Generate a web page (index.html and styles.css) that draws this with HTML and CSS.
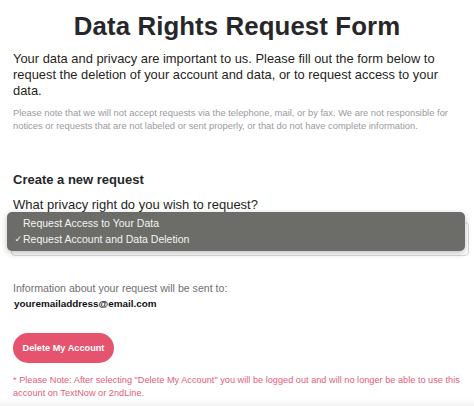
FILE: index.html
```html
<!DOCTYPE html>
<html>
<head>
<meta charset="utf-8">
<link rel="stylesheet" href="styles.css">
</head>
<body>
<main class="page">
  <h1 class="title">Data Rights Request Form</h1>
  <p class="intro">Your data and privacy are important to us. Please fill out the form below to request the deletion of your account and data, or to request access to your data.</p>
  <p class="note">Please note that we will not accept requests via the telephone, mail, or by fax. We are not responsible for notices or requests that are not labeled or sent properly, or that do not have complete information.</p>

  <h2 class="section">Create a new request</h2>
  <div class="question">What privacy right do you wish to request?</div>
  <div class="select-wrap">
    <div class="select-box"></div>
    <ul class="menu">
      <li class="option"><span class="check"></span>Request Access to Your Data</li>
      <li class="option"><span class="check">✓</span>Request Account and Data Deletion</li>
    </ul>
  </div>

  <div class="info">Information about your request will be sent to:</div>
  <div class="email">youremailaddress@email.com</div>

  <button class="delete">Delete My Account</button>
  <p class="warn">* Please Note: After selecting "Delete My Account" you will be logged out and will no longer be able to use this account on TextNow or 2ndLine.</p>
</main>
</body>
</html>
```
FILE: styles.css
```css
html, body {
  margin: 0;
  padding: 0;
  background: #ffffff;
}
body {
  font-family: "Liberation Sans", Arial, sans-serif;
  color: #222226;
  overflow: hidden;
  height: 406px;
  background: linear-gradient(to bottom, #fff 0, #fff 398px, #f3f3f3 406px);
}
.page {
  padding: 0 13px;
}
.title {
  margin: 0;
  padding-top: 11px;
  font-size: 25.8px;
  line-height: 30px;
  font-weight: 700;
  text-align: center;
  color: #27272b;
  letter-spacing: 0.1px;
}
.intro {
  margin: 10px 0 0;
  font-size: 12.9px;
  line-height: 16px;
  color: #1f1f22;
}
.note {
  margin: 7px 0 0;
  font-size: 9.4px;
  line-height: 13px;
  color: #9a9a9e;
}
.section {
  margin: 40px 0 0;
  font-size: 13px;
  line-height: 16px;
  font-weight: 700;
  color: #27272b;
}
.question {
  margin-top: 8px;
  font-size: 13px;
  line-height: 17px;
  color: #1f1f22;
}
.select-wrap {
  position: relative;
  margin: -1px -10px 0 -6px;
  height: 42px;
}
.select-box {
  position: absolute;
  left: 4px;
  right: 2px;
  top: 10px;
  height: 32px;
  border: 1px solid #d8d8d8;
  border-radius: 4px;
  background: #fff;
}
.menu {
  position: absolute;
  left: 0;
  right: 6px;
  top: 0;
  margin: 0;
  padding: 3px 0 4px;
  list-style: none;
  background: #6c6c68;
  border-radius: 5px;
  box-shadow: 0 2px 6px rgba(0,0,0,0.25);
}
.option {
  display: flex;
  align-items: center;
  height: 16px;
  font-size: 10.5px;
  color: #f4f4f2;
}
.check {
  display: inline-block;
  width: 16px;
  text-align: right;
  padding-right: 1px;
  box-sizing: border-box;
  font-family: "DejaVu Sans", sans-serif;
  font-size: 9px;
}
.info {
  margin-top: 27px;
  font-size: 10.6px;
  line-height: 14px;
  color: #6f6f73;
}
.email {
  margin-top: 2px;
  padding-left: 1px;
  font-size: 9.9px;
  line-height: 14px;
  font-weight: 700;
  color: #111;
}
.delete {
  display: block;
  margin-top: 22px;
  width: 101px;
  height: 30px;
  border: none;
  border-radius: 15px;
  background: #e6536f;
  color: #fff;
  font-family: "Liberation Sans", Arial, sans-serif;
  font-size: 9.2px;
  font-weight: 700;
  padding: 0;
}
.warn {
  margin: 11px 0 0;
  font-size: 9.2px;
  line-height: 13px;
  color: #e2607a;
}
```
